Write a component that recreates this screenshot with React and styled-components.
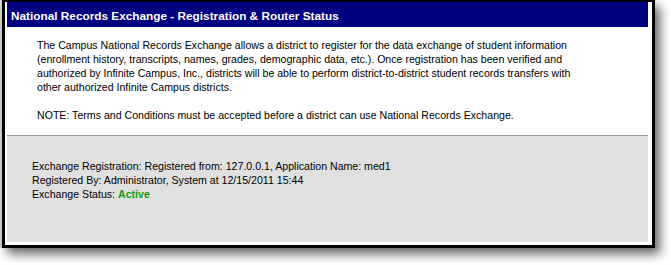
import React from "react";
import styled, { createGlobalStyle } from "styled-components";

const Global = createGlobalStyle`
  html, body { margin: 0; padding: 0; background: #ffffff; }
  body { font-family: "Liberation Sans", Arial, sans-serif; }
`;

const Page = styled.div`
  padding: 0 0 0 2px;
  width: 671px;
  height: 265px;
  box-sizing: border-box;
`;

const Frame = styled.div`
  width: 653px;
  box-sizing: border-box;
  border: 3px solid #000;
  border-top-width: 2px;
  background: #fff;
  padding: 0 4px 3px 2px;
  box-shadow: -2px 0 1px rgba(0, 0, 0, 0.15), 5px 6px 10px rgba(0, 0, 0, 0.6);
`;

const TitleBar = styled.div`
  background: #000080;
  color: #fff;
  height: 25px;
  display: flex;
  align-items: center;
  padding: 2px 0 0 4px;
  box-sizing: border-box;
  font-weight: bold;
  font-size: 11.8px;
`;

const Description = styled.div`
  padding: 11px 56px 13px 30px;
  font-size: 10.6px;
  line-height: 14px;
  color: #000;
  border-bottom: 1px solid #9a9a9a;
`;

const Para = styled.p`
  margin: 0 0 ${(p) => (p.$last ? 0 : 14)}px 0;
`;

const StatusPanel = styled.div`
  background: #e0e0e0;
  height: 106px;
  box-sizing: border-box;
  padding: 23px 25px 0;
  font-size: 10.6px;
  line-height: 14px;
  color: #000;
`;

const Line = styled.div``;

const Status = styled.span`
  color: ${(p) => (p.$active ? "#119911" : "#cc0000")};
  font-weight: bold;
`;

export default function App() {
  return (
    <Page>
      <Global />
      <Frame>
        <TitleBar>National Records Exchange - Registration &amp; Router Status</TitleBar>
        <Description>
          <Para>
            The Campus National Records Exchange allows a district to register for the data
            exchange of student information (enrollment history, transcripts, names, grades,
            demographic data, etc.). Once registration has been verified and authorized by
            Infinite Campus, Inc., districts will be able to perform district-to-district
            student records transfers with other authorized Infinite Campus districts.
          </Para>
          <Para $last>
            NOTE: Terms and Conditions must be accepted before a district can use National
            Records Exchange.
          </Para>
        </Description>
        <StatusPanel>
          <Line>Exchange Registration: Registered from: 127.0.0.1, Application Name: med1</Line>
          <Line>Registered By: Administrator, System at 12/15/2011 15:44</Line>
          <Line>
            Exchange Status: <Status $active>Active</Status>
          </Line>
        </StatusPanel>
      </Frame>
    </Page>
  );
}
